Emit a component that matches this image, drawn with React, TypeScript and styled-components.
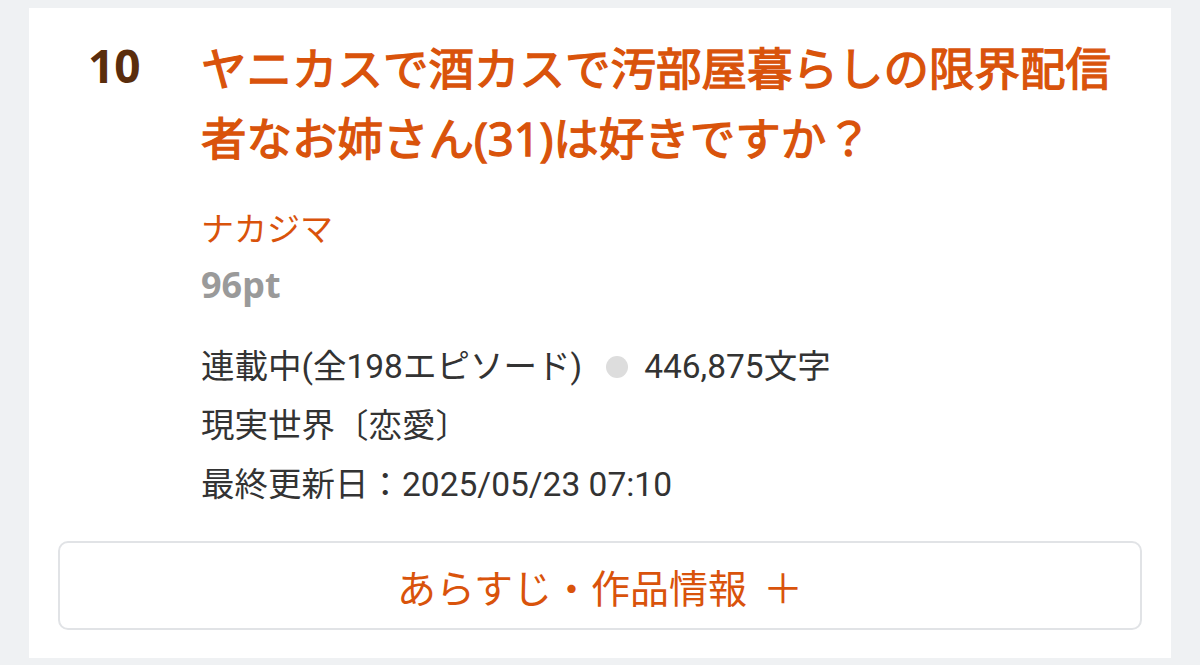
import React from 'react';
import styled, { createGlobalStyle } from 'styled-components';

const GlobalStyle = createGlobalStyle`
  html, body {
    margin: 0;
    padding: 0;
    background: #eff1f3;
  }
  body {
    font-family: 'Noto Sans CJK JP', 'Noto Sans', sans-serif;
  }
`;

const ORANGE = '#d9530b';

const Page = styled.div`
  width: 1200px;
  height: 665px;
  padding: 8px 29px 0;
  box-sizing: border-box;
  overflow: hidden;
`;

const Card = styled.article`
  background: #ffffff;
  padding: 25px 29px 28px;
  display: flex;
  flex-direction: column;
`;

const Head = styled.div`
  display: grid;
  grid-template-columns: 113px 1fr;
  padding-left: 30px;
`;

const Rank = styled.div`
  font-family: 'Noto Sans', sans-serif;
  font-weight: 700;
  font-size: 46px;
  line-height: 70px;
  margin-top: -3px;
  color: #5a2d0d;
`;

const Body = styled.div`
  display: flex;
  flex-direction: column;
`;

const Title = styled.h2`
  margin: 0;
  font-family: 'Noto Sans', 'Noto Sans CJK JP', sans-serif;
  font-weight: 400;
  font-size: 45.5px;
  line-height: 70px;
  color: ${ORANGE};
  -webkit-text-stroke: 1.3px ${ORANGE};
`;

const Author = styled.div`
  margin-top: 29px;
  font-size: 33px;
  line-height: 50px;
  color: ${ORANGE};
`;

const Points = styled.div`
  margin-top: 8px;
  font-family: 'Noto Sans', sans-serif;
  font-weight: 700;
  font-size: 36px;
  line-height: 50px;
  color: #9a9a9a;
`;

const InfoList = styled.div`
  margin-top: 27px;
  display: flex;
  flex-direction: column;
  font-family: Roboto, 'Noto Sans CJK JP', sans-serif;
  font-size: 33.5px;
  line-height: 59px;
  color: #333333;
`;

const InfoRow = styled.div`
  display: flex;
  align-items: center;
  white-space: nowrap;
`;

const Dot = styled.span`
  display: inline-block;
  width: 22px;
  height: 22px;
  border-radius: 50%;
  background: #dddddd;
  margin: 0 16px 0 24px;
`;

const MoreButton = styled.button`
  margin-top: 27px;
  height: 89px;
  width: 100%;
  display: flex;
  align-items: center;
  justify-content: center;
  border: 2px solid #e1e3e6;
  border-radius: 10px;
  background: #ffffff;
  color: ${ORANGE};
  font-family: 'Noto Sans CJK JP', sans-serif;
  font-size: 39px;
  cursor: pointer;
`;

const Plus = styled.span`
  margin-left: 16px;
  font-size: 40px;
`;

const App = () => (
  <>
    <GlobalStyle />
    <Page>
      <Card>
        <Head>
          <Rank>10</Rank>
          <Body>
            <Title>
              ヤニカスで酒カスで汚部屋暮らしの限界配信者なお姉さん(31)は好きですか？
            </Title>
            <Author>ナカジマ</Author>
            <Points>96pt</Points>
            <InfoList>
              <InfoRow>
                連載中(全198エピソード)
                <Dot />
                446,875文字
              </InfoRow>
              <InfoRow>現実世界〔恋愛〕</InfoRow>
              <InfoRow>最終更新日：2025/05/23 07:10</InfoRow>
            </InfoList>
          </Body>
        </Head>
        <MoreButton type="button">
          あらすじ・作品情報<Plus>＋</Plus>
        </MoreButton>
      </Card>
    </Page>
  </>
);

export default App;
